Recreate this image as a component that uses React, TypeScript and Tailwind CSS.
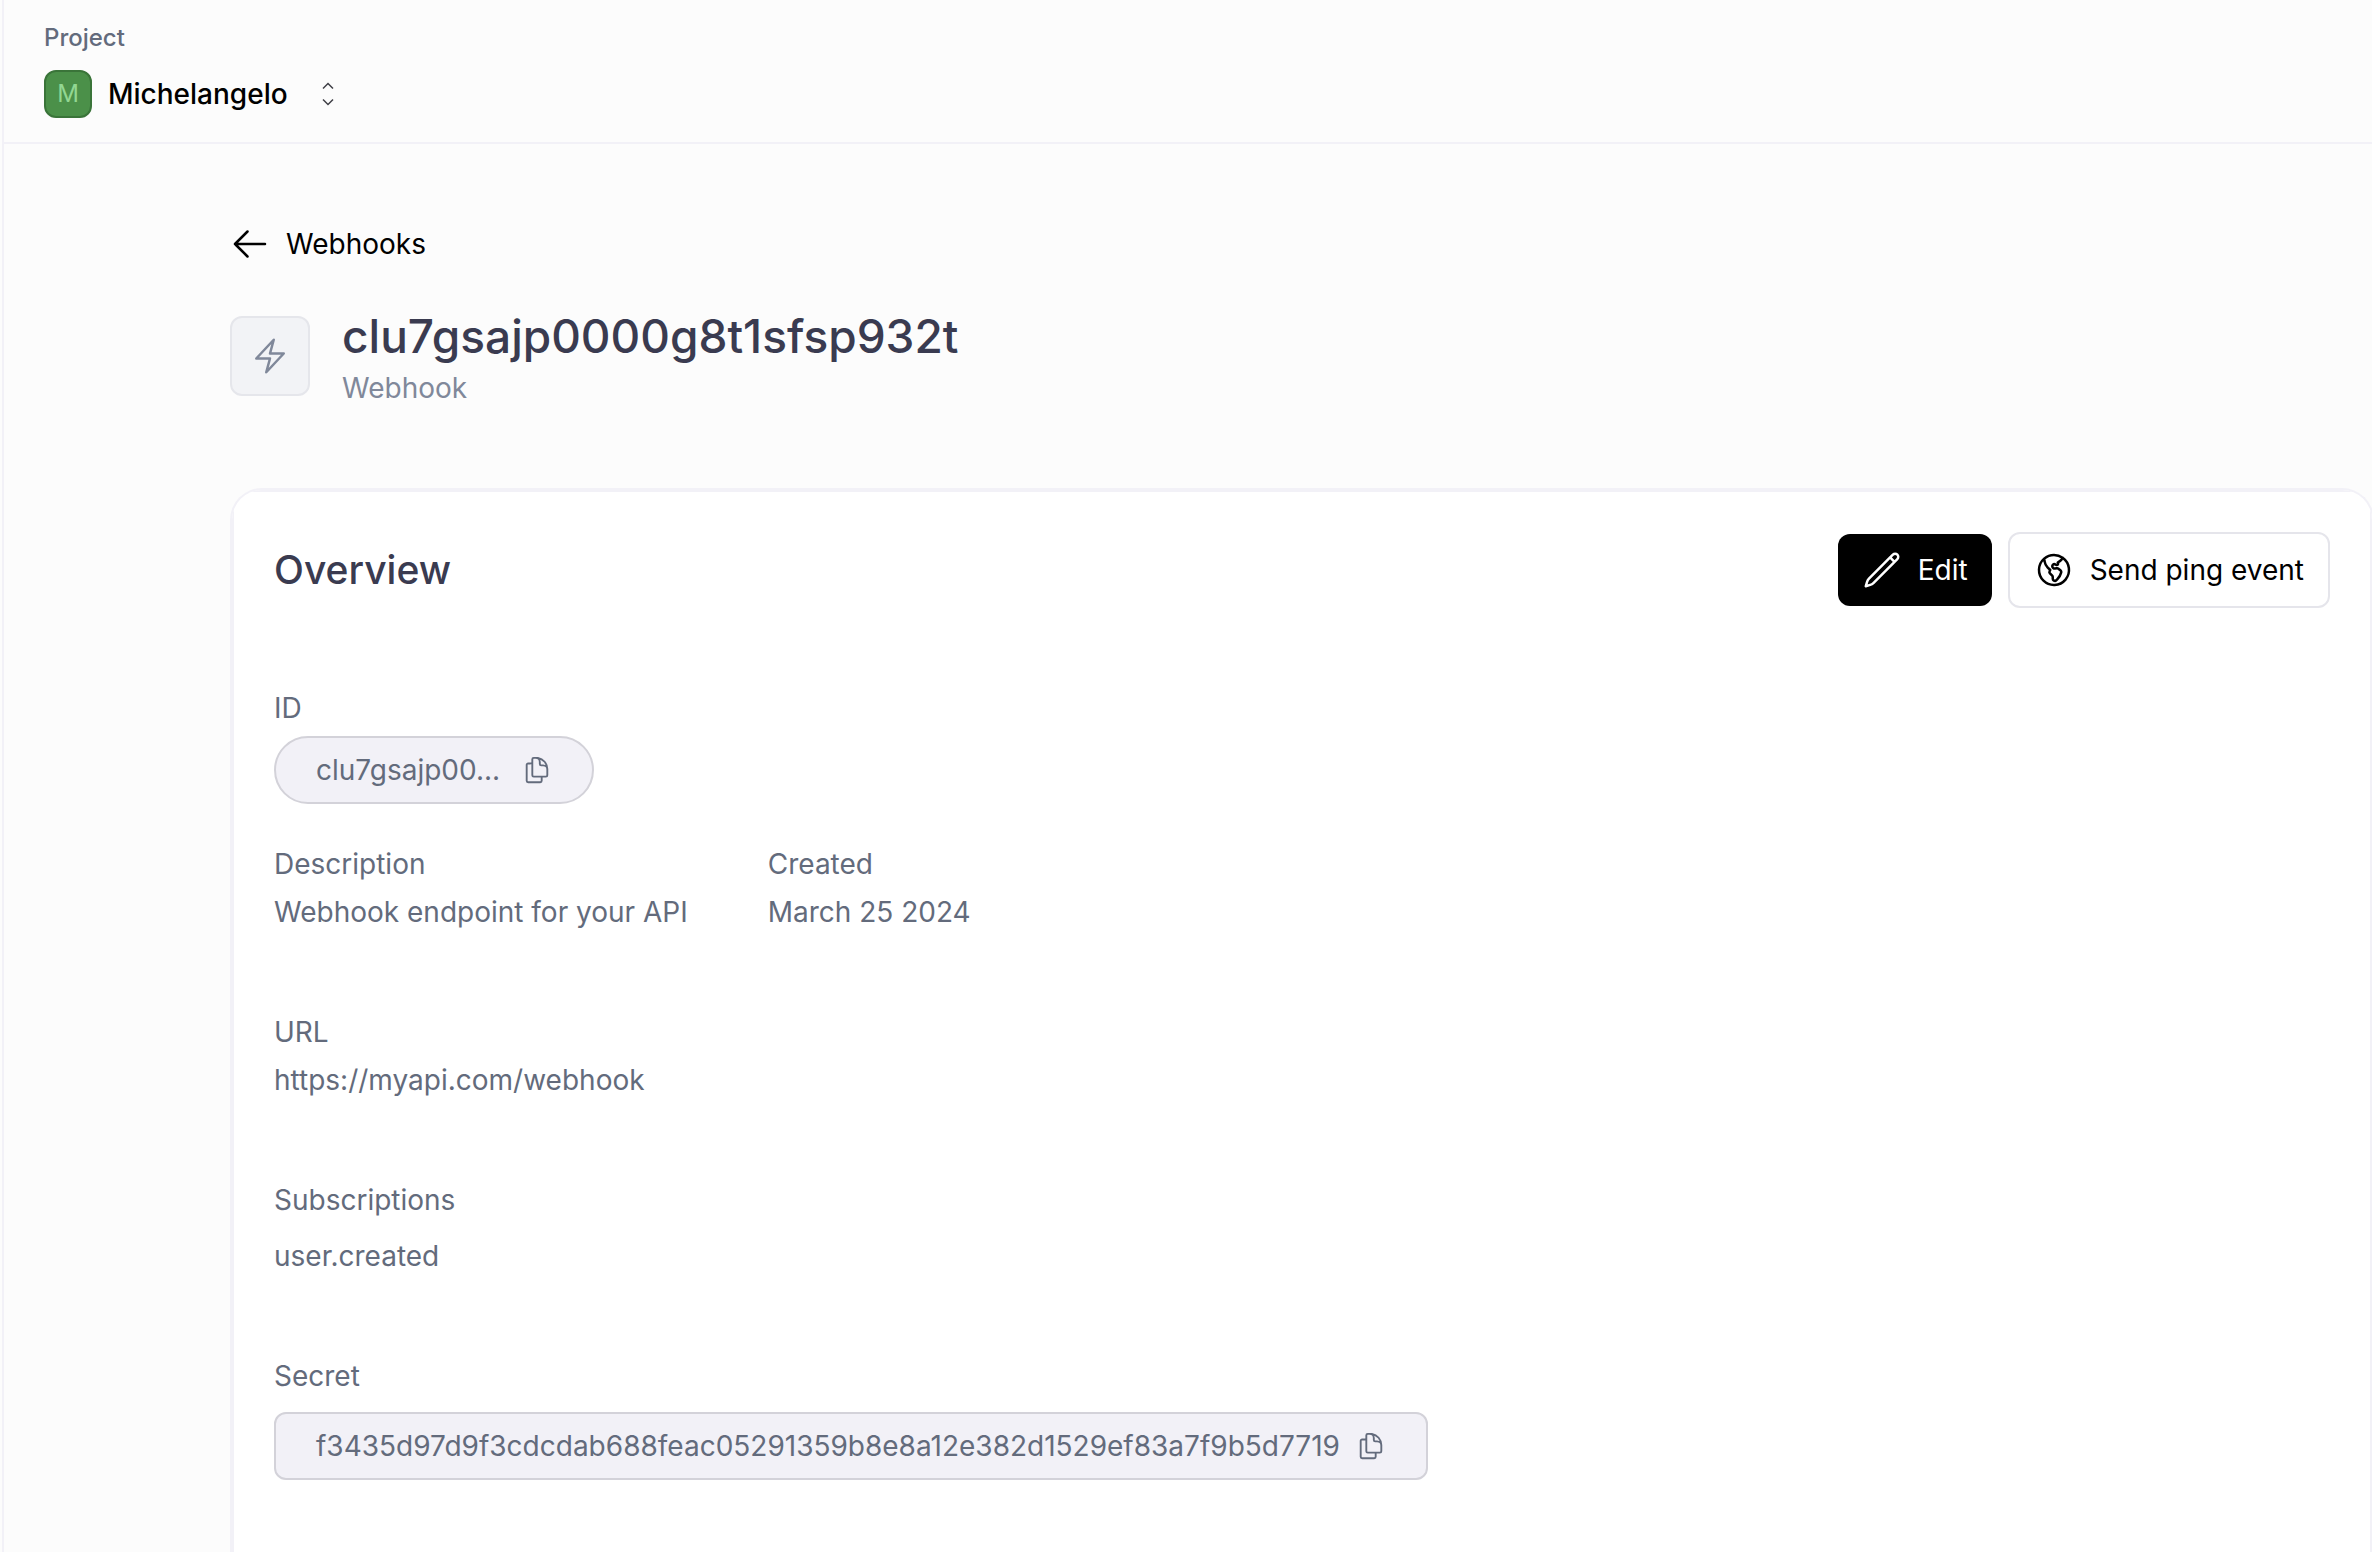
import type { ReactNode } from 'react'
import {
  HiOutlineArrowLeft,
  HiOutlineBolt,
  HiOutlineDocumentDuplicate,
  HiOutlineGlobeAmericas,
  HiOutlinePencil,
} from 'react-icons/hi2'

const SECRET = 'f3435d97d9f3cdcdab688feac05291359b8e8a12e382d1529ef83a7f9b5d7719'

function Field({ label, children }: { label: string; children: ReactNode }) {
  return (
    <div className="flex flex-col">
      <dt>{label}</dt>
      <dd className="mt-2">{children}</dd>
    </div>
  )
}

function Switcher() {
  return (
    <svg width="16" height="24" viewBox="0 0 16 24" fill="none" stroke="#3f3f46" strokeWidth="1.5">
      <path d="M3 6.5 L8 1.5 L13 6.5 M3 17.5 L8 22.5 L13 17.5" />
    </svg>
  )
}

export default function App() {
  return (
    <div className="flex min-h-screen flex-col overflow-x-hidden bg-[#fcfcfc] pl-[2px] font-['Inter',sans-serif] text-[28px] leading-10 text-[#636b7c]">
      <div className="flex flex-1 flex-col border-l-2 border-[#f2f1f7]">
        <header className="border-b-2 border-[#f2f1f7] pt-[18px] pb-6 pl-10">
          <p className="text-2xl leading-10 font-medium">Project</p>
          <button className="mt-3 flex h-12 items-center text-black">
            <span className="flex size-12 items-center justify-center rounded-xl border-2 border-[#3a7439] bg-[#4b9049] text-2xl text-[#92d792]">
              M
            </span>
            <span className="ml-4 font-medium">Michelangelo</span>
            <span className="ml-8">
              <Switcher />
            </span>
          </button>
        </header>

        <main className="flex flex-1 flex-col pt-20 pl-[226px]">
          <a href="#webhooks" className="flex items-center gap-4 text-black">
            <HiOutlineArrowLeft className="size-10" />
            Webhooks
          </a>

          <div className="mt-10 flex items-center gap-8">
            <div className="flex size-20 items-center justify-center rounded-xl border-2 border-[#e5e6eb] bg-[#f2f3f6]">
              <HiOutlineBolt className="size-10 text-[#80889a]" />
            </div>
            <div>
              <h1 className="text-[46px] leading-[64px] font-medium text-[#3a3b50]">clu7gsajp0000g8t1sfsp932t</h1>
              <p className="text-[#80889a]">Webhook</p>
            </div>
          </div>

          {/* Overview card, runs off the bottom of the page */}
          <section className="mt-20 -mr-[2px] flex flex-1 flex-col overflow-hidden rounded-t-4xl border-2 border-b-0 border-[#f2f1f7] bg-white">
            <div className="flex-1 border-2 border-b-0 border-[#f2f1f7] px-10 pt-10">
              <div className="flex items-center justify-between">
                <h2 className="text-[39px] leading-[56px] font-medium text-[#3a3b50]">Overview</h2>
                <div className="flex items-center gap-4">
                  <button className="flex h-[72px] items-center gap-4 rounded-xl bg-black px-6 text-white">
                    <HiOutlinePencil className="size-10" />
                    Edit
                  </button>
                  <button className="flex h-[76px] items-center gap-4 rounded-xl border-2 border-[#e5e5eb] bg-white px-6 text-black">
                    <HiOutlineGlobeAmericas className="size-10" />
                    Send ping event
                  </button>
                </div>
              </div>

              <dl className="mt-20 flex flex-col">
                <Field label="ID">
                  <button className="flex h-[68px] items-center gap-[22px] rounded-full border-2 border-[#d3d2d9] bg-[#f2f1f7] px-10">
                    clu7gsajp00...
                    <HiOutlineDocumentDuplicate className="size-[30px]" />
                  </button>
                </Field>
                <div className="mt-10 flex gap-20">
                  <Field label="Description">Webhook endpoint for your API</Field>
                  <Field label="Created">March 25 2024</Field>
                </div>
                <div className="mt-20">
                  <Field label="URL">https://myapi.com/webhook</Field>
                </div>
                <div className="mt-20">
                  <Field label="Subscriptions">
                    <span className="block pt-2">user.created</span>
                  </Field>
                </div>
                <div className="mt-20">
                  <Field label="Secret">
                    <button className="mt-2 flex h-[68px] items-center gap-4 rounded-xl border-2 border-[#d3d2d9] bg-[#f2f1f7] px-10">
                      {SECRET}
                      <HiOutlineDocumentDuplicate className="size-[30px]" />
                    </button>
                  </Field>
                </div>
              </dl>
            </div>
          </section>
        </main>
      </div>
    </div>
  )
}
